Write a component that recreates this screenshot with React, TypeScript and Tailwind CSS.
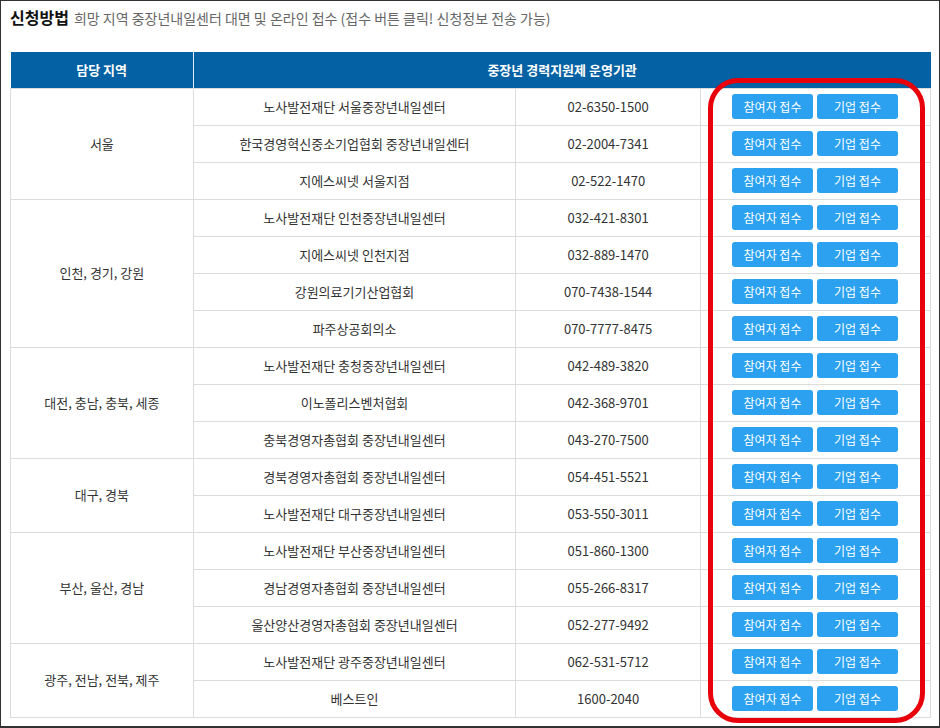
import React from "react";

const groups: [string, [string, string][]][] = [
  ["서울", [["노사발전재단 서울중장년내일센터", "02-6350-1500"], ["한국경영혁신중소기업협회 중장년내일센터", "02-2004-7341"], ["지에스씨넷 서울지점", "02-522-1470"]]],
  ["인천, 경기, 강원", [["노사발전재단 인천중장년내일센터", "032-421-8301"], ["지에스씨넷 인천지점", "032-889-1470"], ["강원의료기기산업협회", "070-7438-1544"], ["파주상공회의소", "070-7777-8475"]]],
  ["대전, 충남, 충북, 세종", [["노사발전재단 충청중장년내일센터", "042-489-3820"], ["이노폴리스벤처협회", "042-368-9701"], ["충북경영자총협회 중장년내일센터", "043-270-7500"]]],
  ["대구, 경북", [["경북경영자총협회 중장년내일센터", "054-451-5521"], ["노사발전재단 대구중장년내일센터", "053-550-3011"]]],
  ["부산, 울산, 경남", [["노사발전재단 부산중장년내일센터", "051-860-1300"], ["경남경영자총협회 중장년내일센터", "055-266-8317"], ["울산양산경영자총협회 중장년내일센터", "052-277-9492"]]],
  ["광주, 전남, 전북, 제주", [["노사발전재단 광주중장년내일센터", "062-531-5712"], ["베스트인", "1600-2040"]]],
];

export default function App() {
  const font = { fontFamily: '"Noto Sans CJK KR", "Noto Sans", sans-serif' };
  return (
    <div className="w-[940px] h-[728px] bg-white relative overflow-hidden" style={font}>
      <div className="absolute inset-0 border border-[#333] border-b-[2px] pointer-events-none" />
      <div className="pl-[10px] pt-[5px] h-[52px] flex items-start">
        <span className="text-[16px] font-bold text-[#111] leading-[24px]">신청방법</span>
        <span className="text-[14px] text-[#666] leading-[24px] ml-[5px] mt-[1px]">희망 지역 중장년내일센터 대면 및 온라인 접수 (접수 버튼 클릭! 신청정보 전송 가능)</span>
      </div>
      <table className="ml-[10px] w-[921px] border-collapse text-[13px] text-[#333]">
        <colgroup>
          <col style={{ width: 183 }} />
          <col style={{ width: 323 }} />
          <col style={{ width: 185 }} />
          <col style={{ width: 230 }} />
        </colgroup>
        <thead>
          <tr className="h-[36px] bg-[#0461a3] text-white font-bold">
            <th className="border-r border-[#e5eef6] font-bold">담당 지역</th>
            <th colSpan={3} className="font-bold">중장년 경력지원제 운영기관</th>
          </tr>
        </thead>
        <tbody>
          {groups.map(([region, rows]) =>
            rows.map(([org, tel], i) => (
              <tr key={org} className="h-[37px]">
                {i === 0 && (
                  <td rowSpan={rows.length} className="border border-[#dcdcdc] text-center">{region}</td>
                )}
                <td className="border border-[#dcdcdc] text-center">{org}</td>
                <td className="border border-[#dcdcdc] text-center">{tel}</td>
                <td className="border border-[#dcdcdc]">
                  <div className="flex gap-[4px] pl-[31px]">
                    <span className="w-[81px] h-[25px] rounded-[3px] bg-[#2ba1ef] text-white text-[12px] flex items-center justify-center">참여자 접수</span>
                    <span className="w-[81px] h-[25px] rounded-[3px] bg-[#2ba1ef] text-white text-[12px] flex items-center justify-center">기업 접수</span>
                  </div>
                </td>
              </tr>
            ))
          )}
        </tbody>
      </table>
      <div className="absolute left-[708px] top-[78px] w-[217px] h-[645px] border-[5px] border-[#e8000b] rounded-[30px] pointer-events-none" />
    </div>
  );
}
